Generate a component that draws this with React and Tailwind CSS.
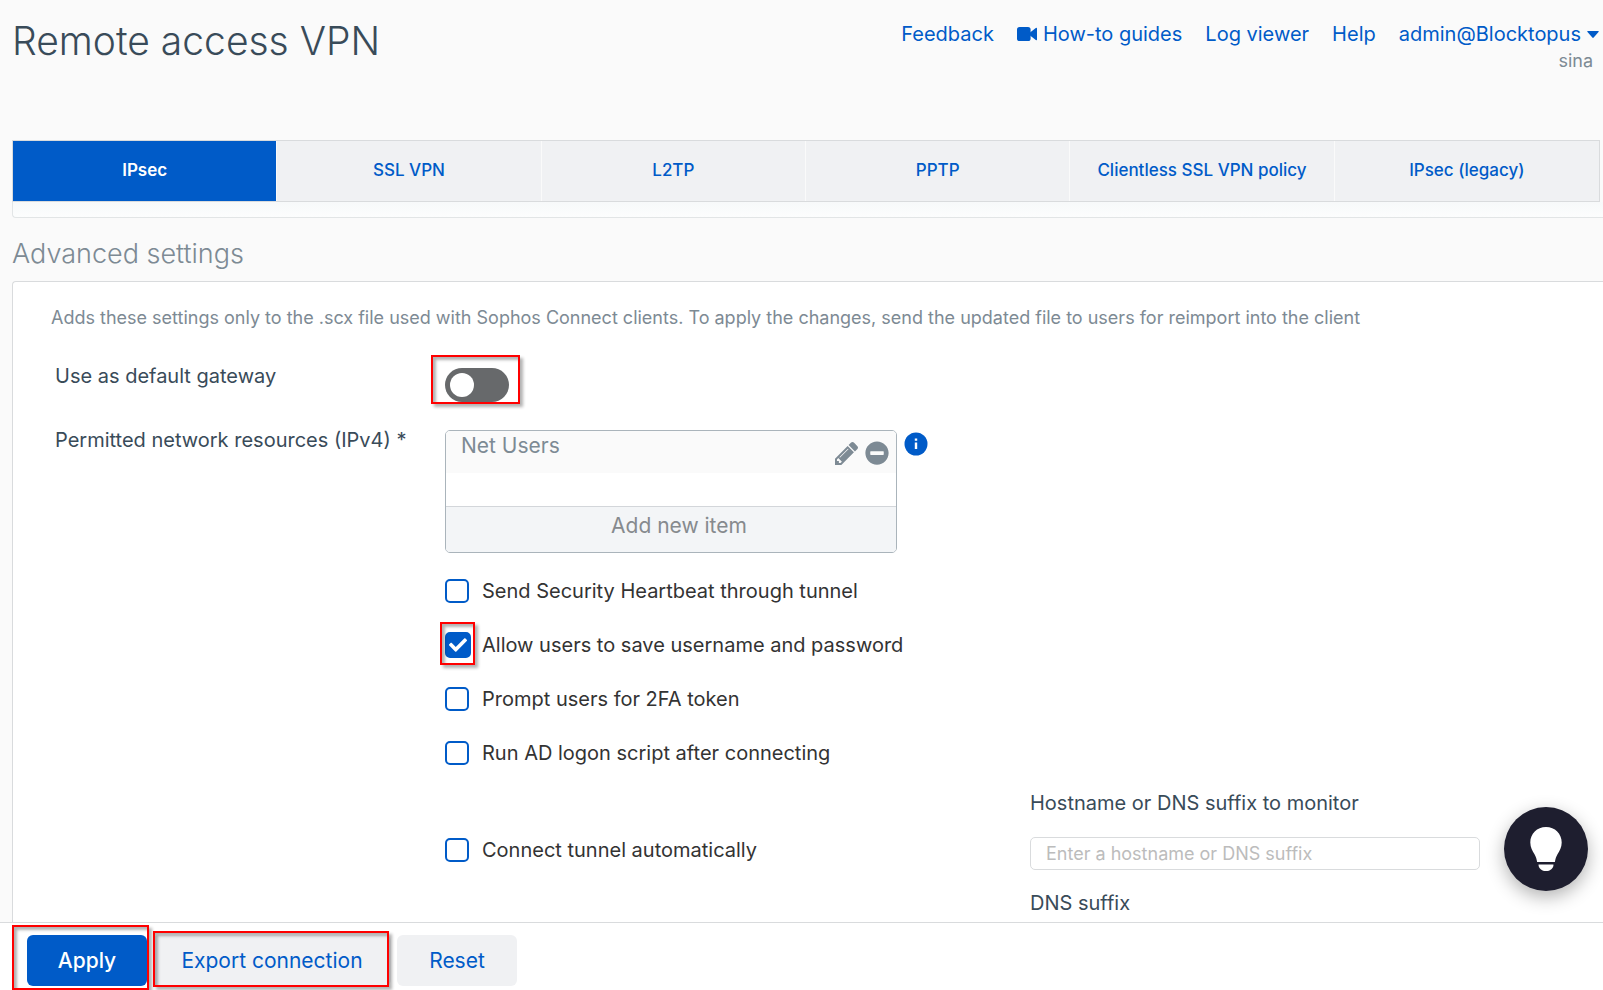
import { useState } from "react";
import { FaMinusCircle, FaCheck } from "react-icons/fa";

const tabs = ["IPsec", "SSL VPN", "L2TP", "PPTP", "Clientless SSL VPN policy", "IPsec (legacy)"];

function Highlight({ className }) {
  return (
    <span
      aria-hidden="true"
      className={`pointer-events-none absolute border-2 border-[#ff0000] shadow-[3px_3px_3px_rgba(0,0,0,0.3),inset_3px_3px_3px_rgba(0,0,0,0.3)] ${className}`}
    />
  );
}

function PencilIcon() {
  return (
    <svg viewBox="128 149 1515 1515" className="size-[23px]" fill="currentColor" aria-hidden="true">
      <path d="M491 1536l91-91-235-235-91 91v107h128v128h107zm523-928q0-22-22-22-10 0-17 7l-542 542q-7 7-7 17 0 22 22 22 10 0 17-7l542-542q7-7 7-17zm-54-192l416 416-832 832h-416v-416zm683 96q0 53-37 90l-166 166-416-416 166-165q36-38 90-38 53 0 91 38l235 234q37 39 37 91z" />
    </svg>
  );
}

function Option({ id, label, defaultChecked = false, highlighted = false }) {
  const [checked, setChecked] = useState(defaultChecked);
  return (
    <div className="relative flex h-[54px] items-center gap-[11px]">
      <span className="grid size-[26px] items-center">
        <input
          id={id}
          type="checkbox"
          checked={checked}
          onChange={(e) => setChecked(e.target.checked)}
          className="col-start-1 row-start-1 size-6 appearance-none rounded-[5px] border-2 border-[#005bc8] bg-white checked:size-[26px] checked:bg-[#005bc8]"
        />
        {checked && <FaCheck aria-hidden="true" className="pointer-events-none z-10 col-start-1 row-start-1 size-[18px] justify-self-center text-white" />}
      </span>
      <label htmlFor={id} className="text-[20px] leading-6 text-[#333333]">{label}</label>
      {highlighted && <Highlight className="top-1 -left-[5px] h-[43px] w-[35px]" />}
    </div>
  );
}

export default function App() {
  return (
    <div className="flex h-screen flex-col overflow-hidden bg-[#fafafa] font-['Inter','Liberation_Sans',sans-serif] text-[#394b59]">
      <header className="flex h-[140px] shrink-0 items-start justify-between pl-3">
        <h1 className="pt-4 text-[39px] leading-[50px] font-light">Remote access VPN</h1>
        <div className="flex flex-col items-end pt-[22px] pr-1">
          <nav className="flex items-center gap-[23px] text-[20px] leading-6 text-[#005bc8]">
            <a href="#feedback">Feedback</a>
            <a href="#guides" className="flex items-center gap-[6px]">
              <svg aria-hidden="true" viewBox="0 0 20 14" className="h-[14px] w-5" fill="currentColor">
                <rect width="13.6" height="14" rx="2.6" />
                <path d="M13 5.600 18.800 0.900Q20 0.300 20 1.500V12.500Q20 13.700 18.800 13.100L13 8.400z" />
              </svg>
              How-to guides
            </a>
            <a href="#log">Log viewer</a>
            <a href="#help">Help</a>
            <a href="#account" className="flex items-center gap-[6px]">
              admin@Blocktopus
              <svg aria-hidden="true" viewBox="0 0 12 7" className="h-[7px] w-3" fill="currentColor"><path d="M0.800 0h10.400Q12.200 0.200 11.500 1.100L6.700 6.600Q6 7.200 5.300 6.600L0.500 1.100Q-0.200 0.200 0.800 0z" /></svg>
            </a>
          </nav>
          <p className="pt-[3px] pr-[6px] text-[18px] leading-6 text-[#7d8a94]">sina</p>
        </div>
      </header>

      <main className="flex min-h-0 flex-1 flex-col overflow-hidden pl-3">
        <nav className="mr-[3px] grid h-[62px] shrink-0 grid-cols-6 border border-[#d9dbdd] bg-[#f0f1f3] text-[17px] font-medium text-[#005bc8]">
          {tabs.map((tab, i) => (
            <a
              key={tab}
              href={`#tab-${i}`}
              aria-current={i === 0 ? "page" : undefined}
              className="flex items-center justify-center border-r border-[#fafafa] last:border-r-0 aria-[current=page]:bg-[#005bc8] aria-[current=page]:bg-clip-padding aria-[current=page]:font-semibold aria-[current=page]:text-white"
            >
              {tab}
            </a>
          ))}
        </nav>
        <div className="h-4 shrink-0 rounded-bl-[4px] border-b border-l border-[#e2e5e6] bg-linear-to-b from-[#f7f9fa] to-[#fcfdfd]" />

        <h2 className="pt-[18px] text-[27px] leading-9 font-light text-[#7d8a94]">Advanced settings</h2>

        <section className="mt-[9px] flex-1 shrink-0 rounded-tl-[4px] border-t border-l border-[#d9dbdd] bg-white pt-6">
          <p className="pl-[38px] text-[18px] leading-6 text-[#7d8a94]">
            Adds these settings only to the .scx file used with Sophos Connect clients. To apply the changes, send the updated file to users for reimport into the client
          </p>

          <div className="flex pt-[34px] pl-[42px]">
            <label htmlFor="gateway" className="w-[390px] text-[20px] leading-6">Use as default gateway</label>
            <span className="relative flex pt-1">
              <input
                id="gateway"
                type="checkbox"
                role="switch"
                className="flex h-[34px] w-16 appearance-none items-center rounded-full bg-[#67696b] px-[5px] before:size-6 before:rounded-full before:bg-white checked:justify-end checked:bg-[#005bc8]"
              />
              <Highlight className="-top-[9px] -left-[14px] h-[49px] w-[89px]" />
            </span>
          </div>

          <div className="flex pt-[26px] pl-[42px]">
            <span id="resources" className="w-[390px] text-[20px] leading-6">Permitted network resources (IPv4) *</span>
            <div role="group" aria-labelledby="resources" className="mt-[2px] w-[452px] overflow-hidden rounded-[5px] border border-[#aab4bb] bg-white">
              <div className="flex h-[42px] items-start justify-between bg-[#fafafa] pr-[7px] pl-[15px] text-[#7d8a94]">
                <span className="pt-[2px] text-[21px] leading-[26px]">Net Users</span>
                <span className="flex gap-[7px] pt-[10px]">
                  <button type="button" aria-label="Edit Net Users"><PencilIcon /></button>
                  <button type="button" aria-label="Remove Net Users"><FaMinusCircle className="size-6" /></button>
                </span>
              </div>
              <div className="h-[33px]" />
              <button type="button" className="block h-[46px] w-full border-t border-[#d3d6da] bg-[#f3f5f7] pb-2 pl-4 text-[21px] leading-6 text-[#868a8e]">Add new item</button>
            </div>
            <button type="button" aria-label="More information" className="mt-1 ml-[7px] size-6 self-start">
              <svg viewBox="0 0 24 24" aria-hidden="true"><circle cx="12" cy="12" r="11.5" fill="#005bc8" /><path d="M12 10.6v6.400M12 6.500v2.300" stroke="#fff" strokeWidth="2.400" /></svg>
            </button>
          </div>

          <div className="pt-[11px] pl-[432px]">
            <Option id="heartbeat" label="Send Security Heartbeat through tunnel" />
            <Option id="save" label="Allow users to save username and password" defaultChecked highlighted />
            <Option id="token" label="Prompt users for 2FA token" />
            <Option id="script" label="Run AD logon script after connecting" />
            <div className="flex">
              <div className="w-[585px] pt-[43px]">
                <Option id="auto" label="Connect tunnel automatically" />
              </div>
              <div className="w-[450px] pt-[11px] text-[20px] leading-6">
                <label htmlFor="hostname">Hostname or DNS suffix to monitor</label>
                <input
                  id="hostname"
                  type="text"
                  placeholder="Enter a hostname or DNS suffix"
                  className="mt-[22px] block h-[33px] w-full rounded-[5px] border border-[#d9dbdd] bg-white px-[15px] text-[18px] placeholder:text-[#bcbcbc]"
                />
                <p className="pt-[21px]">DNS suffix</p>
              </div>
            </div>
          </div>
        </section>
      </main>

      <footer className="flex h-[68px] shrink-0 items-start gap-[6px] border-t border-[#d9dbdd] bg-white pt-3 pl-[27px] text-[21px]">
        <div className="relative">
          <button type="button" className="h-[51px] w-[120px] rounded-[6px] bg-[#005bc8] font-medium text-white">Apply</button>
          <Highlight className="-top-[10px] -left-[15px] h-[65px] w-[137px]" />
        </div>
        <div className="relative">
          <button type="button" className="h-[51px] w-[238px] rounded-[6px] bg-[#f0f1f3] text-[#005bc8]">Export connection</button>
          <Highlight className="-top-1 left-0 h-[56px] w-[236px]" />
        </div>
        <button type="button" className="h-[51px] w-[120px] rounded-[6px] bg-[#f0f1f3] text-[#005bc8]">Reset</button>
      </footer>

      <button type="button" aria-label="Tips" className="fixed right-[15px] bottom-[99px] grid size-[84px] place-items-center rounded-full bg-[#1e1e2f] shadow-[0_6px_18px_rgba(0,0,0,0.3)]">
        <svg viewBox="0 0 32 44" className="h-11 w-8" fill="#fff" aria-hidden="true">
          <path d="M16 0C7 0 0.3 6.800 0.300 15.500c0 5 2.200 8.300 4.200 11.800 1.500 2.700 2.200 4.900 2.600 7.700h17.800c.4-2.800 1.100-5 2.600-7.700 2-3.500 4.200-6.800 4.200-11.800C31.700 6.800 25 0 16 0z" />
          <path d="M8.500 37.400h15c0 4-3.300 6.600-7.500 6.600s-7.500-2.600-7.500-6.600z" />
        </svg>
      </button>
    </div>
  );
}
